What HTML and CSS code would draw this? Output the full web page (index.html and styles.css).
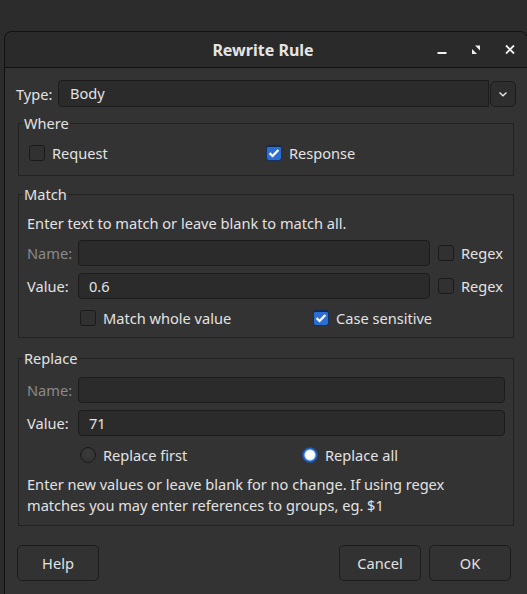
FILE: index.html
```html
<!DOCTYPE html>
<html>
<head>
<meta charset="utf-8">
<title>Rewrite Rule</title>
<link rel="stylesheet" href="styles.css">
</head>
<body>
<div class="window">
  <div class="titlebar">
    <div class="spacer"></div>
    <div class="title">Rewrite Rule</div>
    <div class="controls">
      <span class="ctl"><svg width="12" height="12" viewBox="0 0 12 12"><rect x="1.5" y="8" width="9" height="2" fill="#f0f0f0"/></svg></span>
      <span class="ctl"><svg width="12" height="12" viewBox="0 0 12 12"><polygon points="5,1.5 10,1.5 10,6.5" fill="#f0f0f0"/><polygon points="2,5 2,10 7,10" fill="#f0f0f0"/></svg></span>
      <span class="ctl"><svg width="12" height="12" viewBox="0 0 12 12"><path d="M2 1.5 L10 9.5 M10 1.5 L2 9.5" stroke="#f0f0f0" stroke-width="1.8"/></svg></span>
    </div>
  </div>
  <div class="content">
    <div class="type-row">
      <span class="type-label">Type:</span>
      <div class="combo">Body</div>
      <div class="combo-btn"><svg width="10" height="8" viewBox="0 0 10 8"><path d="M1.5 2.5 L5 5.8 L8.5 2.5" fill="none" stroke="#e8e8e8" stroke-width="1.3"/></svg></div>
    </div>

    <fieldset class="group where">
      <legend>Where</legend>
      <div class="pair where-pair">
        <label class="check"><span class="box"></span>Request</label>
        <label class="check"><span class="box on"><svg width="16" height="16" viewBox="0 0 16 16"><path d="M3.6 8.2 L6.6 11 L12.4 5" fill="none" stroke="#fff" stroke-width="2.3"/></svg></span>Response</label>
      </div>
    </fieldset>

    <fieldset class="group match">
      <legend>Match</legend>
      <div class="hint">Enter text to match or leave blank to match all.</div>
      <div class="form-grid three">
        <span class="flabel disabled">Name:</span>
        <div class="input"></div>
        <label class="check"><span class="box"></span>Regex</label>
        <span class="flabel">Value:</span>
        <div class="input">0.6</div>
        <label class="check"><span class="box"></span>Regex</label>
      </div>
      <div class="pair match-pair">
        <label class="check"><span class="box"></span>Match whole value</label>
        <label class="check"><span class="box on"><svg width="16" height="16" viewBox="0 0 16 16"><path d="M3.6 8.2 L6.6 11 L12.4 5" fill="none" stroke="#fff" stroke-width="2.3"/></svg></span>Case sensitive</label>
      </div>
    </fieldset>

    <fieldset class="group replace">
      <legend>Replace</legend>
      <div class="form-grid two">
        <span class="flabel disabled">Name:</span>
        <div class="input"></div>
        <span class="flabel">Value:</span>
        <div class="input">71</div>
      </div>
      <div class="pair replace-pair">
        <label class="check"><span class="radio"></span>Replace first</label>
        <label class="check"><span class="radio on"></span>Replace all</label>
      </div>
      <div class="note">Enter new values or leave blank for no change. If using regex matches you may enter references to groups, eg. $1</div>
    </fieldset>

    <div class="buttons">
      <button class="btn">Help</button>
      <div class="grow"></div>
      <button class="btn">Cancel</button>
      <button class="btn">OK</button>
    </div>
  </div>
</div>
</body>
</html>
```

FILE: styles.css
```css
html, body {
  margin: 0;
  padding: 0;
}
body {
  background: #2c2c2c;
  width: 527px;
  height: 594px;
  overflow: hidden;
  font-family: "Noto Sans", "Open Sans", sans-serif;
  font-size: 14.6px;
  color: #e2e2e2;
}
.window {
  margin: 31px 0 0 4px;
  width: 524px;
  height: 563px;
  box-sizing: border-box;
  border: 1px solid #121212;
  border-bottom: none;
  border-radius: 8px 8px 0 0;
  background: #333333;
  overflow: hidden;
}
.titlebar {
  height: 35px;
  background: #2a2a2a;
  border-bottom: 1px solid #121212;
  display: grid;
  grid-template-columns: 1fr auto 1fr;
  align-items: center;
}
.title {
  font-weight: bold;
  font-size: 16px;
  color: #e4e4e4;
  padding-right: 6px;
}
.controls {
  display: flex;
  justify-content: flex-end;
}
.ctl {
  width: 34px;
  height: 20px;
  display: flex;
  align-items: center;
  justify-content: center;
}
.content {
  padding: 12px 11px 0 11px;
}
.type-row {
  display: flex;
  align-items: center;
  height: 27px;
}
.type-label {
  width: 42px;
}
.combo {
  flex: 1;
  height: 27px;
  box-sizing: border-box;
  background: #2b2b2b;
  border: 1px solid #1c1c1c;
  border-radius: 4px 0 0 4px;
  padding-left: 11px;
  line-height: 25px;
}
.combo-btn {
  width: 26px;
  height: 26px;
  box-sizing: border-box;
  margin-left: 1px;
  border: 1px solid #1c1c1c;
  border-radius: 5px;
  background: #2e2e2e;
  display: flex;
  align-items: center;
  justify-content: center;
}
.group {
  margin: 0 2px;
  border: 1px solid #222222;
  border-radius: 0;
  min-width: 0;
}
.group legend {
  padding: 0 1px;
  line-height: 18px;
  height: 18px;
}
.where legend {
  margin-left: -6px;
}
.match legend,
.replace legend {
  margin-left: -4px;
}
.where {
  margin-top: 7px;
  padding: 10px 10px 11px 10px;
}
.match {
  margin-top: 9px;
  padding: 10px 10px 8px 8px;
}
.replace {
  margin-top: 11px;
  padding: 10px 8px 9px 8px;
}
.pair {
  display: grid;
  height: 22px;
  align-items: center;
}
.where-pair {
  grid-template-columns: 237px 1fr;
}
.match-pair {
  margin-top: 8px;
  padding-left: 53px;
  grid-template-columns: 233px 1fr;
}
.replace-pair {
  margin-top: 8px;
  padding-left: 53px;
  grid-template-columns: 222px 1fr;
}
.check {
  display: flex;
  align-items: center;
  gap: 7px;
  white-space: nowrap;
}
.box {
  width: 16px;
  height: 16px;
  box-sizing: border-box;
  border: 1px solid #1a1a1a;
  border-radius: 3px;
  background: #313131;
  display: block;
  flex: none;
}
.box svg {
  display: block;
  margin: -1px;
}
.box.on {
  background: #2b6fd2;
  border-color: #17305c;
  border-top: 2px solid #132a52;
}
.box.on svg {
  margin-top: -2px;
}
.radio {
  width: 16px;
  height: 16px;
  box-sizing: border-box;
  border: 1px solid #1a1a1a;
  border-radius: 50%;
  background: radial-gradient(circle at 50% 40%, #3c3c3c, #2f2f2f);
  flex: none;
}
.radio.on {
  border: 1px solid #1b4e9c;
  background: radial-gradient(circle at 50% 50%, #ffffff 0, #ffffff 4px, #d6e4f8 5px, #2a6cd0 6px, #2260c0 8px);
}
.hint {
  line-height: 20px;
}
.form-grid {
  display: grid;
  row-gap: 7px;
  align-items: center;
  margin-top: 7px;
}
.form-grid.three {
  grid-template-columns: 51px 1fr auto;
}
.form-grid.three .check {
  margin-left: 8px;
}
.form-grid.two {
  grid-template-columns: 51px 1fr;
  margin-top: 0;
}
.flabel.disabled {
  color: #8a8a8a;
}
.input {
  height: 26px;
  box-sizing: border-box;
  background: #2b2b2b;
  border: 1px solid #1c1c1c;
  border-radius: 4px;
  padding-left: 10px;
  line-height: 24px;
}
.note {
  margin-top: 8px;
  line-height: 21px;
}
.buttons {
  display: flex;
  gap: 8px;
  margin: 19px 5px 0 1px;
}
.grow {
  flex: 1;
}
.btn {
  width: 82px;
  height: 36px;
  box-sizing: border-box;
  background: #323232;
  border: 1px solid #1c1c1c;
  border-radius: 5px;
  color: #e2e2e2;
  font-family: "Noto Sans", "Open Sans", sans-serif;
  font-size: 14.6px;
  padding: 0;
}
```
